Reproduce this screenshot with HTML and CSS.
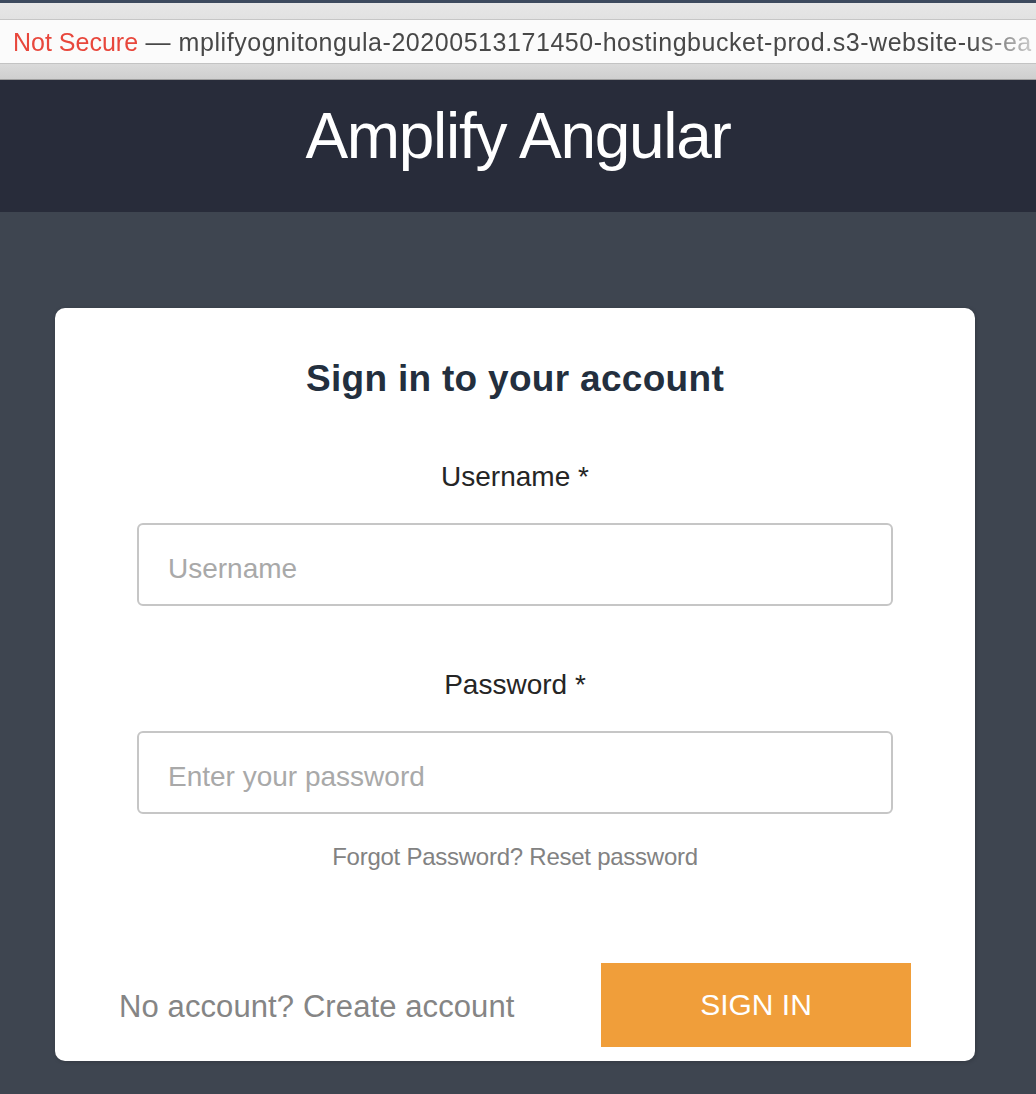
FILE: index.html
```html
<!DOCTYPE html>
<html lang="en">
<head>
<meta charset="utf-8">
<title>Amplify Angular</title>
<link rel="stylesheet" href="styles.css">
</head>
<body>
  <div class="chrome">
    <div class="chrome-top"></div>
    <div class="urlbar">
      <span class="url-text"><span class="insecure">Not Secure</span><span class="url-rest"> — mplifyognitongula-20200513171450-hostingbucket-prod.s3-website-us-ea</span></span>
    </div>
    <div class="chrome-bottom"></div>
  </div>

  <header class="app-header">
    <h1 class="app-title">Amplify Angular</h1>
  </header>

  <main class="stage">
    <section class="card">
      <h2 class="card-title">Sign in to your account</h2>

      <div class="field field-first">
        <label class="field-label" for="username">Username *</label>
        <input class="field-input" id="username" type="text" placeholder="Username">
      </div>

      <div class="field">
        <label class="field-label" for="password">Password *</label>
        <input class="field-input" id="password" type="password" placeholder="Enter your password">
      </div>

      <p class="hint">Forgot Password? <span class="hint-link">Reset password</span></p>

      <div class="card-footer">
        <span class="footer-text">No account? <span class="footer-link">Create account</span></span>
        <button class="signin-btn" type="button">SIGN IN</button>
      </div>
    </section>
  </main>
</body>
</html>
```

FILE: styles.css
```css
* { box-sizing: border-box; }

html, body {
  margin: 0;
  padding: 0;
}

body {
  background: #3e4550;
  min-height: 100vh;
  font-family: "Liberation Sans", Arial, Helvetica, sans-serif;
}

/* Browser chrome */
.chrome {
  height: 80px;
  display: flex;
  flex-direction: column;
}

.chrome-top {
  height: 20px;
  background: linear-gradient(#3d4a5e 0, #3d4a5e 3px, #e7e7e7 3px, #e2e2e2 19px, #c6c6c6 19px);
}

.urlbar {
  height: 43px;
  background: #fbfbfb;
  padding: 2px 0 0 13px;
  line-height: 41px;
  font-size: 25px;
  color: #484848;
  white-space: nowrap;
}

.url-text {
  display: inline-block;
  -webkit-mask-image: linear-gradient(to right, #000 0, #000 960px, rgba(0,0,0,0.3) 1015px);
  mask-image: linear-gradient(to right, #000 0, #000 960px, rgba(0,0,0,0.3) 1015px);
}

.insecure {
  color: #e8473c;
}

.url-rest {
  letter-spacing: 0.55px;
}

.chrome-bottom {
  height: 17px;
  background: linear-gradient(#c3c3c3 0, #c3c3c3 1px, #dadada 1px, #cfcfcf 16px, #9e9e9e 16px);
}

/* App header */
.app-header {
  height: 132px;
  background: #282c3a;
  padding-top: 19px;
}

.app-title {
  margin: 0;
  text-align: center;
  color: #ffffff;
  font-weight: normal;
  font-size: 64px;
  line-height: 74px;
  letter-spacing: -1.3px;
}

/* Stage */
.stage {
  padding: 96px 0 33px 55px;
}

.card {
  width: 920px;
  background: #ffffff;
  border-radius: 10px;
  box-shadow: 1px 1px 4px rgba(0, 0, 0, 0.18);
  padding: 51px 64px 14px;
}

.card-title {
  margin: 0 0 62px;
  text-align: center;
  color: #232f3e;
  font-size: 37px;
  line-height: 40px;
  font-weight: bold;
  letter-spacing: 0.3px;
}

.field {
  margin: 0 18px;
  display: flex;
  flex-direction: column;
}

.field-first {
  margin-bottom: 63px;
}

.field-label {
  text-align: center;
  font-size: 28px;
  line-height: 32px;
  color: #252525;
  margin-bottom: 30px;
}

.field-input {
  width: 100%;
  height: 83px;
  border: 2px solid #c6c6c6;
  border-radius: 6px;
  padding: 9px 0 0 29px;
  font-family: "Liberation Sans", Arial, Helvetica, sans-serif;
  font-size: 28px;
  color: #333;
  background: #fff;
  outline: none;
}

.field-input::placeholder {
  color: #a9a9a9;
}

.hint {
  margin: 29px 0 0;
  text-align: center;
  font-size: 24px;
  line-height: 28px;
  letter-spacing: -0.25px;
  color: #828282;
}

.card-footer {
  margin-top: 92px;
  display: flex;
  justify-content: space-between;
  align-items: center;
}

.footer-text {
  font-size: 31px;
  padding-top: 3px;
  letter-spacing: 0.1px;
  color: #858585;
}

.signin-btn {
  width: 310px;
  height: 84px;
  border: none;
  border-radius: 0;
  background: #f09e3a;
  color: #ffffff;
  font-family: "Liberation Sans", Arial, Helvetica, sans-serif;
  font-size: 30px;
  padding: 0;
  cursor: pointer;
}
```
